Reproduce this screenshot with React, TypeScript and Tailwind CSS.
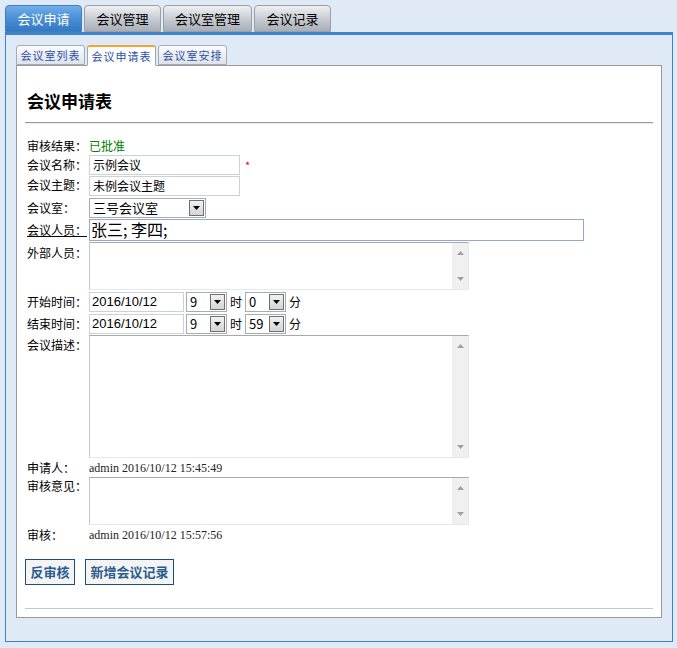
import React from "react";

const cjk = { fontFamily: '"Noto Sans CJK SC", "Liberation Sans", sans-serif' };
const serif = { fontFamily: '"Liberation Serif", "Noto Sans CJK SC", serif' };

function Select({ value, width }: { value: string; width: number }) {
  return (
    <div
      className="flex h-[20px] items-stretch border border-[#a5acb5] bg-white"
      style={{ width }}
    >
      <div className="flex-1 pl-[3px] text-[13px] leading-[18px] text-black" style={cjk}>
        {value}
      </div>
      <div className="m-[1px] flex w-[15px] items-center justify-center border border-[#707070] bg-gradient-to-b from-[#f2f2f2] to-[#d4d4d4]">
        <svg width="7" height="4" viewBox="0 0 7 4">
          <path d="M0 0H7L3.5 4Z" fill="#000" />
        </svg>
      </div>
    </div>
  );
}

function TextArea({ height }: { height: number }) {
  return (
    <div
      className="flex w-[380px] border border-t-[#a9a9a9] border-l-[#c8c8c8] border-r-[#e3e9ef] border-b-[#e3e9ef] bg-white"
      style={{ height }}
    >
      <div className="flex-1" />
      <div className="flex w-[16px] flex-col items-center justify-between bg-[#f0f0f0] py-[8px]">
        <svg width="7" height="4" viewBox="0 0 7 4">
          <path d="M0 4H7L3.5 0Z" fill="#a0a0a0" />
        </svg>
        <svg width="7" height="4" viewBox="0 0 7 4">
          <path d="M0 0H7L3.5 4Z" fill="#a0a0a0" />
        </svg>
      </div>
    </div>
  );
}

function Label({ children, className = "" }: { children: React.ReactNode; className?: string }) {
  return (
    <div className={`w-[62px] shrink-0 text-[12px] leading-[18px] text-black ${className}`} style={cjk}>
      {children}
    </div>
  );
}

function DateInput({ value }: { value: string }) {
  return (
    <div className="h-[20px] w-[95px] border border-[#c9d1da] bg-white pl-[2px] text-[13px] leading-[18px] text-black" style={{ fontFamily: '"Liberation Sans", sans-serif' }}>
      {value}
    </div>
  );
}

export default function App() {
  const topTabs = ["会议申请", "会议管理", "会议室管理", "会议记录"];
  const topWidths = [77, 77, 89, 77];
  return (
    <div className="h-[648px] w-[677px] overflow-hidden bg-[#dfeaf6]" style={cjk}>
      <div className="flex gap-[2px] pl-[5px] pt-[5px]">
        {topTabs.map((t, i) => (
          <div
            key={t}
            className={
              i === 0
                ? "flex h-[27px] items-center justify-center rounded-t-[4px] border border-[#3d7fc4] bg-gradient-to-b from-[#72aee8] via-[#4a8fd6] to-[#3479c2] text-[13px] text-white"
                : "flex h-[27px] items-center justify-center rounded-t-[4px] border border-[#9aa0a8] bg-gradient-to-b from-[#eef0f2] via-[#c9ccd2] to-[#a9aeb6] text-[13px] text-black"
            }
            style={{ width: topWidths[i] }}
          >
            {t}
          </div>
        ))}
      </div>
      <div className="ml-[5px] h-[610px] w-[668px] border border-t-[3px] border-[#3d82cc] bg-[#dfeaf6] pl-[10px] pt-[10px]">
        <div className="flex gap-[2px]">
          {["会议室列表", "会议申请表", "会议室安排"].map((t, i) => (
            <div
              key={t}
              className={
                i === 1
                  ? "relative z-10 -mb-[1px] flex h-[21px] w-[69px] items-center justify-center rounded-t-[3px] border border-t-2 border-[#a3a9b0] border-t-[#f0a732] border-b-white bg-white text-[11px] tracking-[1px] text-[#2c4fa6]"
                  : "flex h-[20px] w-[69px] items-center justify-center rounded-t-[3px] border border-[#a3acb8] bg-gradient-to-b from-[#fbfcfd] to-[#dde2ea] text-[11px] tracking-[1px] text-[#2c4fa6]"
              }
            >
              {t}
            </div>
          ))}
        </div>
        <div className="h-[553px] w-[646px] border border-[#9a9a9a] bg-white px-[8px]">
          <div className="pl-[2px] pt-[21px] text-[17px] font-bold leading-[28px] text-black">会议申请表</div>
          <div className="mt-[7px] h-[2px] border-t border-[#999] border-b border-b-[#eee]" />
          <div className="flex flex-col pl-[2px] pt-[12px]">
            <div className="flex h-[19px] items-center">
              <Label>审核结果：</Label>
              <span className="text-[12px] text-[#008000]">已批准</span>
            </div>
            <div className="flex h-[20px] items-center">
              <Label>会议名称：</Label>
              <div className="h-[20px] w-[151px] border border-[#c9d1da] pl-[3px] text-[12px] leading-[18px]">示例会议</div>
              <span className="ml-[5px] text-[11px] text-[#ff0000]">*</span>
            </div>
            <div className="flex h-[21px] items-start pt-[1px]">
              <Label>会议主题：</Label>
              <div className="h-[20px] w-[151px] border border-[#c9d1da] pl-[3px] text-[12px] leading-[18px]">未例会议主题</div>
            </div>
            <div className="flex h-[22px] items-center pt-[1px]">
              <Label>会议室：</Label>
              <Select value="三号会议室" width={117} />
            </div>
            <div className="flex h-[23px] items-center">
              <Label className="text-[#1a5bbf] underline">会议人员：</Label>
              <div className="h-[22px] w-[495px] border border-[#94a7cc] pl-[1px] text-[16px] leading-[19px]">张三; 李四;</div>
            </div>
            <div className="flex h-[50px] items-start pt-[1px]">
              <Label className="pt-[2px]">外部人员：</Label>
              <TextArea height={48} />
            </div>
            <div className="flex h-[22px] items-center">
              <Label>开始时间：</Label>
              <DateInput value="2016/10/12" />
              <div className="ml-[2px]"><Select value="9" width={41} /></div>
              <span className="mx-[3px] text-[12px]">时</span>
              <Select value="0" width={41} />
              <span className="ml-[3px] text-[12px]">分</span>
            </div>
            <div className="flex h-[22px] items-center">
              <Label>结束时间：</Label>
              <DateInput value="2016/10/12" />
              <div className="ml-[2px]"><Select value="9" width={41} /></div>
              <span className="mx-[3px] text-[12px]">时</span>
              <Select value="59" width={41} />
              <span className="ml-[3px] text-[12px]">分</span>
            </div>
            <div className="flex h-[124px] items-start">
              <Label className="pt-[1px]">会议描述：</Label>
              <TextArea height={123} />
            </div>
            <div className="flex h-[18px] items-center">
              <Label>申请人：</Label>
              <span className="text-[12px] text-[#222]" style={serif}>admin 2016/10/12 15:45:49</span>
            </div>
            <div className="flex h-[49px] items-start">
              <Label className="pt-[0px]">审核意见：</Label>
              <TextArea height={48} />
            </div>
            <div className="flex h-[17px] items-center">
              <Label>审核：</Label>
              <span className="text-[12px] text-[#222]" style={serif}>admin 2016/10/12 15:57:56</span>
            </div>
            <div className="-ml-[2px] mt-[16px] flex gap-[10px]">
              <button className="h-[26px] w-[50px] border border-[#1b4f7e] bg-[#f4f4f4] text-[13px] font-bold text-[#2b5c8e]" style={cjk}>反审核</button>
              <button className="h-[26px] w-[89px] border border-[#1b4f7e] bg-[#f4f4f4] text-[13px] font-bold text-[#2b5c8e]" style={cjk}>新增会议记录</button>
            </div>
          </div>
          <div className="mt-[23px] h-[2px] border-t border-[#c8c8c8]" />
        </div>
      </div>
    </div>
  );
}
